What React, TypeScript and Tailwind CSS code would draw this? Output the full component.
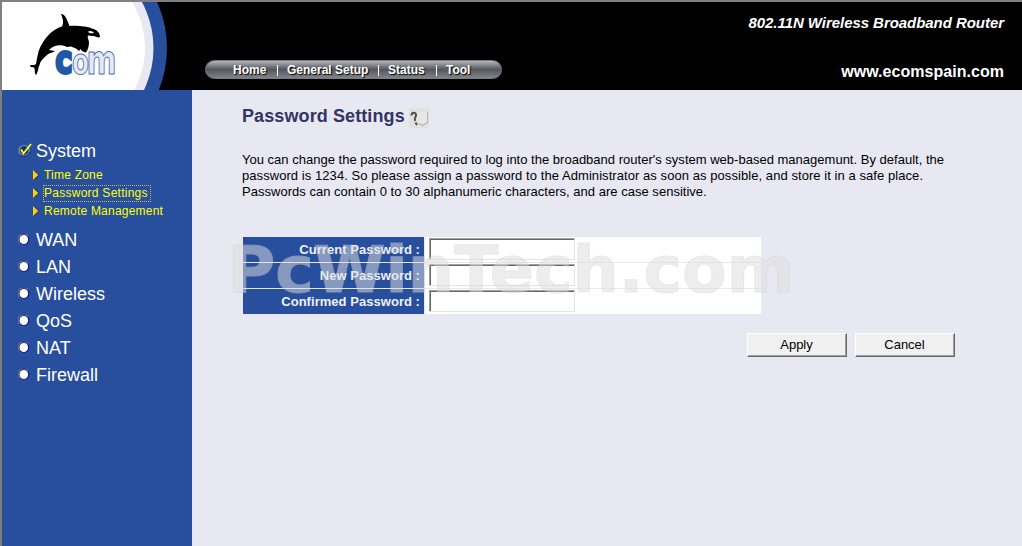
const NAV = [
  { label: "Home", cls: "w-[34px]" },
  { label: "General Setup", cls: "w-[81px]" },
  { label: "Status", cls: "w-[38px]" },
  { label: "Tool", cls: "w-[24px]" },
];

const SUB_ITEMS = ["Time Zone", "Password Settings", "Remote Management"];
const SECTIONS = ["WAN", "LAN", "Wireless", "QoS", "NAT", "Firewall"];
const FIELDS = ["Current Password :", "New Password :", "Confirmed Password :"];

function Logo() {
  return (
    <svg width="170" height="88" viewBox="2 2 170 88" className="block shrink-0">
      <circle cx="56" cy="48" r="111" fill="#284f9e" />
      <circle cx="56" cy="48" r="97.5" fill="#e8e8f2" />
      <circle cx="56" cy="48" r="89" fill="#fff" />
      <path
        d="M61 14C63.500 13.500 66 17 67.500 21L69.500 26C78 25.500 87 26.500 92 28.500C97 29.500 100 33 100 37C98 38.500 96 36 93 36L88 35.500C87 37 88.500 39 89 42C89 46 88 50 86 52.500C83 52 81.500 51 80.500 49L79 51L76 48.500L71 46.500L67 47C61 43.500 53 45.500 49 50L55 51C52 53 49 53 47 55C43 58 40 62 39.500 65C38 68 38 73 36 75C34 73 35.500 69 34 67.500C32 67 30 67 30 65.500C31 64 34 66 36 64C37.500 57 38 50 42 44C47 35 54 29 62 26.500C64 23 63 19 61 14Z"
        fill="#000"
      />
      <path d="M88 31.500C90 30.300 93 31 94 33.200C92 33.500 89 33.500 88 31.500Z" fill="#fff" />
      <g fontFamily="'DejaVu Sans Condensed', 'DejaVu Sans', sans-serif" fontWeight="bold">
        <text x="72" y="74" fontSize="35" textLength="17" lengthAdjust="spacingAndGlyphs" fill="#e8e8f2" stroke="#4a6db5" strokeWidth="1">o</text>
        <text x="86.500" y="74" fontSize="41" textLength="30" lengthAdjust="spacingAndGlyphs" fill="#e8e8f2" stroke="#4a6db5" strokeWidth="1">m</text>
        <text x="56" y="72.500" fontSize="28" textLength="15.500" lengthAdjust="spacingAndGlyphs" fill="#2057a7" stroke="#2057a7" strokeWidth="4">C</text>
      </g>
    </svg>
  );
}

function CheckIcon() {
  return (
    <svg width="14" height="14" viewBox="0 0 14 14" className="relative top-[-1px] block">
      <circle cx="6" cy="7.500" r="5" fill="#18346f" stroke="#8994a8" strokeWidth="1.200" />
      <path d="M2 12A6 6 0 0 0 11.500 9" fill="none" stroke="#14148c" />
      <path d="M3 6.500L5.500 10.500L13 1" fill="none" stroke="#ffff20" strokeWidth="1.800" />
    </svg>
  );
}

function Bullet() {
  return (
    <svg width="12" height="12" viewBox="0 0 12 12" className="relative top-[-1px] block">
      <circle cx="6" cy="5.500" r="5.300" fill="#10109a" />
      <path d="M1.500 9A5.200 5.200 0 0 1 10 1.500" fill="none" stroke="#6b6b6b" strokeWidth="1.500" />
      <ellipse cx="5.800" cy="5.500" rx="4.300" ry="4.600" fill="#fff" />
    </svg>
  );
}

function Arrow() {
  return (
    <svg width="6" height="10" viewBox="0 0 6 10" className="block">
      <path d="M1 0L6 5L1 10Z" fill="#1b2f5c" />
      <path d="M0 0L5.300 5L0 10Z" fill="#ffcc10" />
    </svg>
  );
}

function HelpIcon() {
  return (
    <svg width="20" height="20" viewBox="0 0 20 20" className="block">
      <rect width="20" height="20" fill="#e1e1e1" />
      <path d="M9.500 15L13.500 17.500L18.500 14.500L18.500 4" fill="none" stroke="#b5b5b5" strokeWidth="1.200" />
      <path d="M9.500 4L9.500 14L13 16L18 14V4Z" fill="#e7e7e7" />
      <path d="M2.500 7.500C2.500 4 7 4 7 7C7 9.500 5 10 6 13M6.500 14.500L8 17" fill="none" stroke="#4d4d4d" strokeWidth="2" />
    </svg>
  );
}

function Sidebar() {
  return (
    <nav className="w-[190px] shrink-0 bg-[#284f9e] pt-[48px]">
      <div className="flex h-[26px] items-center pl-4">
        <CheckIcon />
        <span className="ml-1 text-[18px] leading-[26px] text-white">System</span>
      </div>
      <ul className="pt-[2px] text-[12px] leading-[15px] text-[#ffff00]">
        {SUB_ITEMS.map((item, i) => (
          <li key={item} className="flex h-[18px] items-center pl-[31px]">
            <Arrow />
            <span
              className={
                i === 1
                  ? "ml-[4px] border border-dotted border-[#d8b050] pr-[2px] tracking-[0.26px]"
                  : "ml-[5px] tracking-[0.22px]"
              }
            >
              {item}
            </span>
          </li>
        ))}
      </ul>
      <ul className="pt-[7px] text-[18px] leading-[27px] text-white">
        {SECTIONS.map((item) => (
          <li key={item} className="flex h-[27px] items-center pl-4">
            <Bullet />
            <span className="ml-[6px]">{item}</span>
          </li>
        ))}
      </ul>
    </nav>
  );
}

function PasswordTable() {
  return (
    <div className="relative ml-px w-[518px]">
      <div className="flex flex-col gap-px">
        {FIELDS.map((label) => (
          <div key={label} className="flex h-[25px] gap-px">
            <label className="w-[181px] bg-[#284f9e] pr-[4px] text-right text-[13px] leading-[25px] font-bold tracking-[0.04px] text-[#eef2fb]">
              {label}
            </label>
            <div className="flex-1 bg-white pt-px pl-[4px]">
              <div className="h-[22px] w-[146px] border border-t-[#a0a0a0] border-r-[#e3e3e3] border-b-[#e3e3e3] border-l-[#a0a0a0]">
                <input
                  type="password"
                  aria-label={label}
                  className="block h-[20px] w-[144px] border-t border-l border-[#696969] bg-white outline-none"
                />
              </div>
            </div>
          </div>
        ))}
      </div>
      <svg
        width="572"
        height="76"
        viewBox="0 0 572 76"
        className="pointer-events-none absolute top-[-6px] left-[-17px] opacity-[0.52]"
      >
        <text
          x="1.500"
          y="61"
          fontFamily="'DejaVu Sans', sans-serif"
          fontWeight="bold"
          fontSize="64"
          textLength="567"
          lengthAdjust="spacingAndGlyphs"
          fill="#dedede"
          stroke="#d4d4d4"
          strokeWidth="1"
        >
          PcWinTech.com
        </text>
      </svg>
    </div>
  );
}

function PushButton({ label }: { label: string }) {
  return (
    <button className="h-[24px] w-[100px] border border-t-white border-r-[#696969] border-b-[#696969] border-l-white bg-[#f0f0f0] pr-px text-[13px] leading-[20px] text-black shadow-[inset_-1px_-1px_0_#a0a0a0]">
      {label}
    </button>
  );
}

export default function App() {
  return (
    <div className="flex h-[546px] w-[1022px] flex-col overflow-hidden border-t-2 border-l-2 border-[#808080] bg-[#e8e8f2] font-['Liberation_Sans',Arial,sans-serif]">
      <header className="flex h-[88px] shrink-0 bg-black text-white">
        <Logo />
        <div className="ml-[33px] pt-[58px]">
          <div className="flex h-[19px] w-[297px] items-center rounded-full border border-[#777a80] bg-linear-to-b from-[#b4b6ba] via-[#54575f] to-[#80838a] pt-[2px] pl-[27px] text-[12px] leading-[15px] font-bold whitespace-nowrap [text-shadow:1px_1px_1px_#000]">
            {NAV.map((n, i) => (
              <div key={n.label} className="flex items-center">
                {i > 0 && <span className="mr-[9px] ml-[10px] h-[11px] w-px bg-white" />}
                <span className={n.cls}>{n.label}</span>
              </div>
            ))}
          </div>
        </div>
        <div className="ml-auto flex flex-col items-end pr-[18px] font-bold">
          <div className="mt-[11px] text-[15px] leading-[20px] tracking-[-0.05px] italic">802.11N Wireless Broadband Router</div>
          <div className="mt-[29px] text-[16px] leading-[20px] tracking-[0.04px]">www.ecomspain.com</div>
        </div>
      </header>
      <div className="flex flex-1">
        <Sidebar />
        <main className="w-[764px] pt-[15px] pl-[50px]">
          <div className="flex h-[22px] items-center">
            <h1 className="text-[18px] leading-[22px] font-bold tracking-[0.1px] text-[#333366]">Password Settings</h1>
            <div className="mt-[3px] ml-[4px]">
              <HelpIcon />
            </div>
          </div>
          <p className="mt-[25px] text-[13px] leading-[16px] whitespace-nowrap text-black">
            <span className="block tracking-[0.01px]">You can change the password required to log into the broadband router's system web-based managemunt. By default, the</span>
            <span className="block tracking-[0.065px]">password is 1234. So please assign a password to the Administrator as soon as possible, and store it in a safe place.</span>
            <span className="block tracking-[0.02px]">Passwords can contain 0 to 30 alphanumeric characters, and are case sensitive.</span>
          </p>
          <div className="mt-[37px]">
            <PasswordTable />
          </div>
          <div className="mt-[19px] flex justify-end gap-[8px] pr-px">
            <PushButton label="Apply" />
            <PushButton label="Cancel" />
          </div>
        </main>
      </div>
    </div>
  );
}
